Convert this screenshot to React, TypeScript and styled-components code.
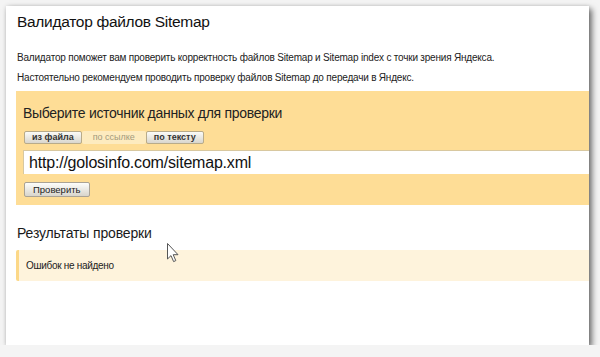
import styled, { createGlobalStyle } from "styled-components";

const SANS = `"Liberation Sans", Arial, Helvetica, sans-serif`;

const GlobalStyle = createGlobalStyle`
  html, body {
    margin: 0;
    padding: 0;
    background: #f4f4f4;
    font-family: ${SANS};
  }
`;

const Frame = styled.div`
  position: relative;
  margin: 6px 0 0 6px;
  width: 583px;
  height: 339px;
  box-sizing: border-box;
  padding: 5px 0 0 10px;
  background: #ffffff;
  overflow: hidden;
  font-family: ${SANS};
  box-shadow: 3px 3px 6px rgba(0, 0, 0, 0.55), 0 0 4px rgba(0, 0, 0, 0.12);
`;

const Title = styled.h1`
  margin: 0 0 18px 1px;
  font-family: ${SANS};
  font-size: 15.5px;
  line-height: 22px;
  letter-spacing: -0.3px;
  font-weight: normal;
  color: #111;
`;

const Lead = styled.p`
  margin: 0 0 7px 1px;
  font-family: ${SANS};
  font-size: 10px;
  line-height: 13px;
  letter-spacing: -0.2px;
  color: #222;
`;

const SourceBox = styled.section`
  margin-top: 7px;
  padding: 13px 0 8px 7px;
  background: #fedd96;
`;

const BoxTitle = styled.h2`
  margin: 0 0 9px;
  font-family: ${SANS};
  font-size: 14px;
  line-height: 18px;
  letter-spacing: -0.3px;
  font-weight: normal;
  color: #222;
`;

const Tabs = styled.div`
  display: flex;
  margin-left: 1px;
`;

const Tab = styled.button<{ $active?: boolean }>`
  margin: 0;
  height: 13px;
  padding: 0 ${(p) => (p.$active ? "11px" : "7px")};
  font-family: ${SANS};
  font-size: 9px;
  line-height: 11px;
  font-weight: ${(p) => (p.$active ? "normal" : "bold")};
  color: ${(p) => (p.$active ? "#a39a7c" : "#333")};
  border: ${(p) => (p.$active ? "none" : "1px solid #b8ab8a")};
  border-radius: 2px;
  background: ${(p) =>
    p.$active ? "#fdebbf" : "linear-gradient(#fbfbf8, #d9d6cd)"};
  cursor: pointer;
`;

const UrlInput = styled.div`
  margin-top: 6px;
  height: 24px;
  box-sizing: border-box;
  padding: 0 5px;
  display: flex;
  align-items: center;
  background: #fff;
  border-top: 1px solid #d8c8a0;
  border-left: 1px solid #d8c8a0;
  font-family: ${SANS};
  font-size: 16px;
  letter-spacing: -0.2px;
  color: #111;
`;

const CheckButton = styled.button`
  margin: 8px 0 0 1px;
  height: 15px;
  padding: 0 8px;
  font-family: ${SANS};
  font-size: 9.5px;
  line-height: 12px;
  color: #222;
  border: 1px solid #aaa395;
  border-radius: 2px;
  background: linear-gradient(#fdfdfb, #d8d5cc);
`;

const ResultsTitle = styled.h2`
  margin: 20px 0 8px 1px;
  font-family: ${SANS};
  font-size: 14px;
  line-height: 17px;
  letter-spacing: -0.15px;
  font-weight: normal;
  color: #1a1a1a;
`;

const Notice = styled.div`
  height: 31px;
  box-sizing: border-box;
  padding-left: 7px;
  display: flex;
  align-items: center;
  background: #fef3dc;
  border-left: 3px solid #fcd888;
  border-radius: 2px 0 0 2px;
  font-family: ${SANS};
  font-size: 10px;
  letter-spacing: -0.3px;
  color: #222;
`;

const Pointer = styled.svg`
  position: absolute;
  left: 161px;
  top: 237px;
`;

export default function App() {
  return (
    <>
      <GlobalStyle />
      <Frame>
        <Title>Валидатор файлов Sitemap</Title>
        <Lead>
          Валидатор поможет вам проверить корректность файлов Sitemap и Sitemap index с точки зрения Яндекса.
        </Lead>
        <Lead>Настоятельно рекомендуем проводить проверку файлов Sitemap до передачи в Яндекс.</Lead>

        <SourceBox>
          <BoxTitle>Выберите источник данных для проверки</BoxTitle>
          <Tabs>
            <Tab>из файла</Tab>
            <Tab $active>по ссылке</Tab>
            <Tab>по тексту</Tab>
          </Tabs>
          <UrlInput>http://golosinfo.com/sitemap.xml</UrlInput>
          <CheckButton>Проверить</CheckButton>
        </SourceBox>

        <ResultsTitle>Результаты проверки</ResultsTitle>
        <Notice>Ошибок не найдено</Notice>

        <Pointer width="13" height="20" viewBox="0 0 13 20" aria-hidden="true">
          <path
            d="M0.5 0.5 L0.5 16 L4 12.6 L6.6 18.6 L8.8 17.6 L6.2 11.7 L11 11.7 Z"
            fill="#fff"
            stroke="#555"
            strokeWidth="1"
            strokeLinejoin="round"
          />
        </Pointer>
      </Frame>
    </>
  );
}
